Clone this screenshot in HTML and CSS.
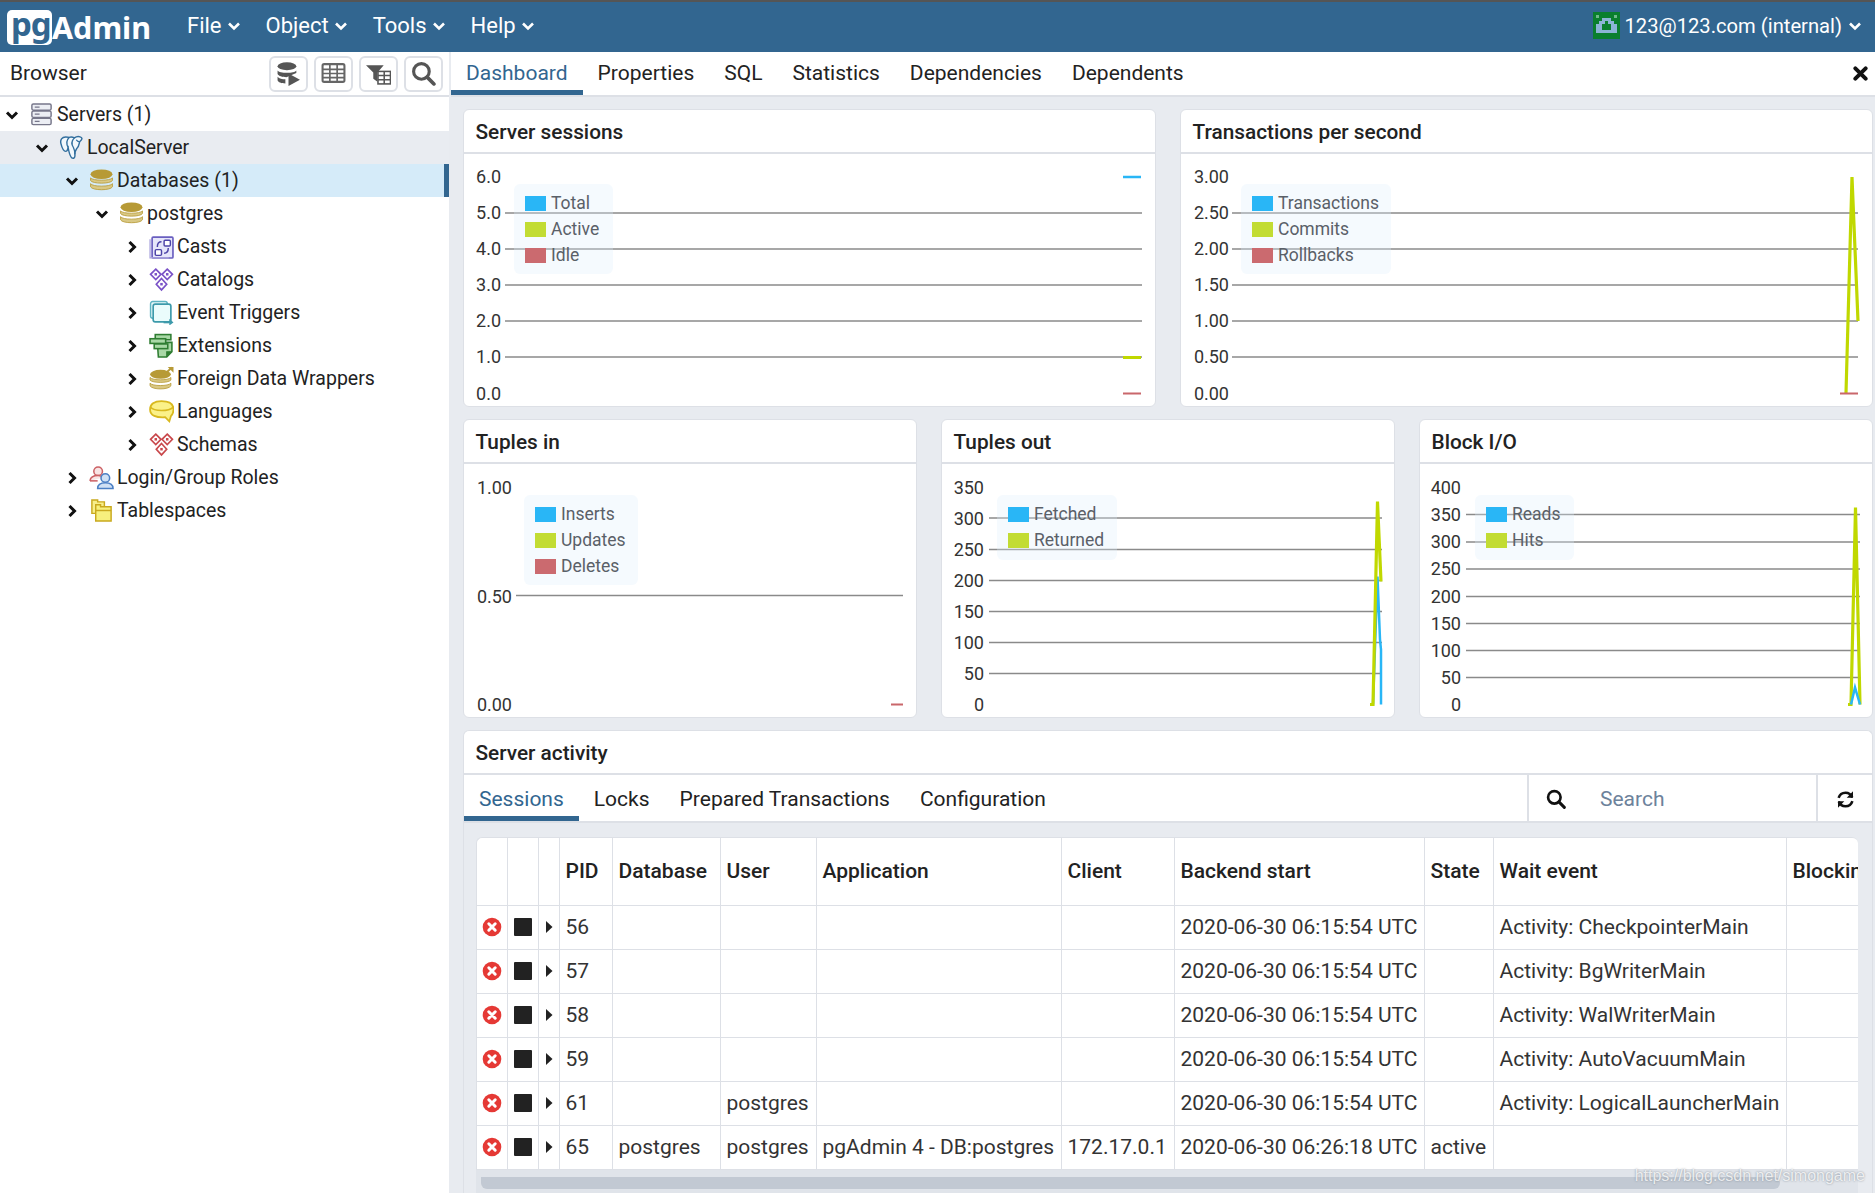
FILE: index.html
```html
<!DOCTYPE html>
<html lang="en">
<head>
<meta charset="utf-8">
<title>pgAdmin 4</title>
<link rel="stylesheet" href="styles.css">
</head>
<body>
<svg class="defs" width="0" height="0" aria-hidden="true">
  <defs>
    <symbol id="chev-d" viewBox="0 0 14 14"><path d="M2 4.500 7 9.500 12 4.500" fill="none" stroke="#111" stroke-width="3"/></symbol>
    <symbol id="chev-r" viewBox="0 0 14 14"><path d="M4.500 2 9.500 7 4.500 12" fill="none" stroke="#111" stroke-width="3"/></symbol>
    <symbol id="menu-chev" viewBox="0 0 14 14"><path d="M2 4.500 7 9.500 12 4.500" fill="none" stroke="#fff" stroke-width="2.600"/></symbol>
    <symbol id="db" viewBox="0 0 24 24">
      <ellipse cx="12" cy="6" rx="10.500" ry="4.600" fill="#b79a36"/>
      <path d="M1.500 9.500C3 12.400 21 12.400 22.500 9.500V12C21 15.400 3 15.400 1.500 12Z" fill="#d9c884" stroke="#b79a36" stroke-width=".8"/>
      <path d="M1.500 15C3 18.200 21 18.200 22.500 15V18C21 21.800 3 21.800 1.500 18Z" fill="#d9c884" stroke="#b79a36" stroke-width=".8"/>
    </symbol>
    <symbol id="diamonds" viewBox="0 0 24 24">
      <g fill="#fff" stroke="currentColor" stroke-width="1.600">
        <path d="M6.500 2 11.500 7 6.500 12 1.500 7Z"/><path d="M17.500 2 22.500 7 17.500 12 12.500 7Z"/><path d="M12 11 17 16.500 12 22 7 16.500Z"/>
      </g>
      <g fill="currentColor"><rect x="5.300" y="5.800" width="2.400" height="2.400"/><rect x="16.300" y="5.800" width="2.400" height="2.400"/><rect x="10.800" y="15.300" width="2.400" height="2.400"/></g>
    </symbol>
    <symbol id="cancel" viewBox="0 0 20 20"><circle cx="10" cy="10" r="9.300" fill="#e53935"/><path d="M6.800 6.800 13.200 13.200M13.200 6.800 6.800 13.200" stroke="#fff" stroke-width="3" stroke-linecap="round"/></symbol>
    <symbol id="caret" viewBox="0 0 8 12"><path d="M1 0 7.500 6 1 12Z" fill="#222"/></symbol>
  </defs>
</svg>

<div class="app">
  <header class="topbar">
    <div class="logo"><span class="logo-pg">pg</span><span class="logo-admin">Admin</span></div>
    <nav class="menu">
      <span class="menu-item">File <svg class="menu-chevron"><use href="#menu-chev"/></svg></span>
      <span class="menu-item">Object <svg class="menu-chevron"><use href="#menu-chev"/></svg></span>
      <span class="menu-item">Tools <svg class="menu-chevron"><use href="#menu-chev"/></svg></span>
      <span class="menu-item">Help <svg class="menu-chevron"><use href="#menu-chev"/></svg></span>
    </nav>
    <div class="user">
      <svg class="avatar" viewBox="0 0 9 9" shape-rendering="crispEdges">
        <rect width="9" height="9" fill="#0a7f2e"/>
        <path d="M1 1h1v1H1zM7 1h1v1H7z" fill="#6fb98a"/>
        <path d="M3 2h3v1h1v1H2V3h1zM1 4h2v3H1zM6 4h2v3H6zM3 6h3v1H3z" fill="#8cb4d6"/>
        <path d="M4 3h1v1H4z" fill="#0a7f2e"/>
      </svg>
      <span>123@123.com (internal)</span>
      <svg class="menu-chevron user-chevron"><use href="#menu-chev"/></svg>
    </div>
  </header>

  <div class="main">
    <aside class="browser">
      <div class="browser-head">
        <span class="browser-title">Browser</span>
        <div class="tools">
          <button class="tool" type="button"><svg viewBox="0 0 24 24"><ellipse cx="10.500" cy="5" rx="9" ry="3.800" fill="#555"/><path d="M1.500 9C3 12 18 12 19.500 9V11.500L10 15.500C6 15.500 2.500 14.500 1.500 12.500ZM1.500 15C3 17 6 17.500 9 17.500V21.500C5 21.500 2 20.500 1.500 18.500Z" fill="#555"/><path d="M12 12 23 18 12 24Z" fill="#555"/></svg></button>
          <button class="tool" type="button"><svg viewBox="0 0 24 24"><rect x="1.500" y="3" width="21" height="17" rx="1.500" fill="#fff" stroke="#666" stroke-width="2"/><path d="M1.500 8h21M1.500 12h21M1.500 16h21M8.500 3v17M15.500 3v17" stroke="#666" stroke-width="1.600"/></svg></button>
          <button class="tool" type="button"><svg viewBox="0 0 24 24"><path d="M0 4H17L11 11V20L7 17V11Z" fill="#555"/><rect x="11.500" y="10" width="12" height="12" fill="#fff" stroke="#555" stroke-width="1.500"/><path d="M11.500 14h12M11.500 18h12M17.500 10v12" stroke="#555" stroke-width="1.500"/></svg></button>
          <button class="tool" type="button"><svg viewBox="0 0 24 24"><circle cx="10" cy="10" r="7.500" fill="none" stroke="#555" stroke-width="3"/><path d="M15.500 15.500 22 22" stroke="#555" stroke-width="3.500" stroke-linecap="round"/></svg></button>
        </div>
      </div>
      <ul class="tree">
        <li class="node l0"><svg class="chev"><use href="#chev-d"/></svg>
          <svg class="ico" viewBox="0 0 26 26"><g fill="#eceef4" stroke="#77778a" stroke-width="1.500"><rect x="3" y="2" width="20" height="6.500" rx="1.500"/><rect x="3" y="9.500" width="20" height="6.500" rx="1.500"/><rect x="3" y="17" width="20" height="6.500" rx="1.500"/></g><path d="M6 5.200h5M6 12.700h5M6 20.200h5" stroke="#77778a" stroke-width="1.300"/></svg>
          <span>Servers (1)</span></li>
        <li class="node l1 hovered"><svg class="chev"><use href="#chev-d"/></svg>
          <svg class="ico" viewBox="0 0 26 26"><path d="M7 2C3 2 1 5 2 9 3 13 5 17 7 17 9 17 9 14 9.500 13 10 16 11 21 13 23.500 15 25 17 24 16.500 20 16.500 18 17 16 18.500 14 21 12 21 8 21.500 7 24 5 25 3 22 2 20 1 18 1.500 16 3 14 2 12 2 10.500 2.500 9.500 2 8 2 7 2Z" fill="#f2f8fc" stroke="#336f9e" stroke-width="1.500"/><path d="M10.500 2.500C8 5 7.500 9 9.500 13M16 3C13 6 13 10 15 13 16 15 16.500 17 16.500 20M21.500 7C20 7 18.500 6 18 5" fill="none" stroke="#336f9e" stroke-width="1.400"/></svg>
          <span>LocalServer</span></li>
        <li class="node l2 selected"><svg class="chev"><use href="#chev-d"/></svg>
          <svg class="ico"><use href="#db"/></svg>
          <span>Databases (1)</span></li>
        <li class="node l3"><svg class="chev"><use href="#chev-d"/></svg>
          <svg class="ico"><use href="#db"/></svg>
          <span>postgres</span></li>
        <li class="node l4"><svg class="chev"><use href="#chev-r"/></svg>
          <svg class="ico" viewBox="0 0 24 24"><rect x="3" y="3" width="20" height="20" rx="1" fill="#e6e6fa" stroke="#6a5fc0" stroke-width="1.600"/><path d="M1 5V23H19" fill="none" stroke="#a9a3de" stroke-width="1.200"/><rect x="14.500" y="6" width="6" height="5.500" rx="1" fill="#fff" stroke="#4d44a8" stroke-width="1.400"/><rect x="6" y="15" width="6" height="5.500" rx="1" fill="#fff" stroke="#4d44a8" stroke-width="1.400"/><path d="M12 7.500C9 7.500 8 9 8 12.500M14.500 18.500C17.500 18.500 18.500 17 18.500 13.500" fill="none" stroke="#4d44a8" stroke-width="1.400"/></svg>
          <span>Casts</span></li>
        <li class="node l4"><svg class="chev"><use href="#chev-r"/></svg>
          <svg class="ico purple"><use href="#diamonds"/></svg>
          <span>Catalogs</span></li>
        <li class="node l4"><svg class="chev"><use href="#chev-r"/></svg>
          <svg class="ico" viewBox="0 0 24 24"><rect x="1.500" y="1.500" width="16" height="16" rx="2" fill="#eafafa" stroke="#5db4c2" stroke-width="1.400"/><rect x="4" y="4" width="17" height="17" rx="2" fill="#eafcfc" stroke="#3d9aab" stroke-width="1.600"/><path d="M14 21.500H20" stroke="#3d9aab" stroke-width="1.800"/><path d="M19.500 18 23.500 21.500 19.500 24.500Z" fill="#3d9aab"/></svg>
          <span>Event Triggers</span></li>
        <li class="node l4"><svg class="chev"><use href="#chev-r"/></svg>
          <svg class="ico" viewBox="0 0 24 24"><g fill="#a9d8a6" stroke="#2f7d32" stroke-width="1.500"><path d="M8 9H22V18L17 23H9Z"/><rect x="6" y="1.500" width="15" height="5"/><rect x="1" y="5.500" width="15" height="4.500"/><rect x="5" y="10.500" width="13" height="4.500"/></g><path d="M17 23V18H22" fill="#2f7d32" stroke="#2f7d32"/></svg>
          <span>Extensions</span></li>
        <li class="node l4"><svg class="chev"><use href="#chev-r"/></svg>
          <svg class="ico" viewBox="0 0 24 24"><ellipse cx="11" cy="8" rx="10" ry="4.300" fill="#b79a36"/><path d="M1 11C3 14 19 14 21 11V13.500C19 16.500 3 16.500 1 13.500ZM1 16.500C3 19.500 19 19.500 21 16.500V19C19 23 3 23 1 19Z" fill="#d9c884" stroke="#b79a36" stroke-width=".8"/><path d="M17 6 22 1.500" stroke="#b79a36" stroke-width="1.800"/><path d="M18 1H23.500V6.500Z" fill="#b79a36"/></svg>
          <span>Foreign Data Wrappers</span></li>
        <li class="node l4"><svg class="chev"><use href="#chev-r"/></svg>
          <svg class="ico" viewBox="0 0 24 24"><path d="M12 2C20 2 23.500 5 23.500 10 23.500 13 22 15.500 21 16.500L19.500 21.500 15.500 17.500C7 18 1 16 1 10 1 5 5 2 12 2Z" fill="#fbf189" stroke="#d9b91f" stroke-width="1.700"/><path d="M1.500 8C5 12 19 12 23 8" fill="none" stroke="#d9b91f" stroke-width="1.500"/></svg>
          <span>Languages</span></li>
        <li class="node l4"><svg class="chev"><use href="#chev-r"/></svg>
          <svg class="ico red"><use href="#diamonds"/></svg>
          <span>Schemas</span></li>
        <li class="node l2"><svg class="chev"><use href="#chev-r"/></svg>
          <svg class="ico" viewBox="0 0 26 26"><circle cx="9.500" cy="6.500" r="4.500" fill="#f9e4e4" stroke="#cc6165" stroke-width="1.600"/><path d="M1 16.500C1.500 12.500 5 11 9.500 11 12 11 14 12 15 13" fill="#f9e4e4" stroke="#cc6165" stroke-width="1.600"/><path d="M1 16.500H9" stroke="#cc6165" stroke-width="1.600"/><circle cx="17" cy="13.500" r="4.500" fill="#cfe0f4" stroke="#4b7fc4" stroke-width="1.600"/><path d="M9 24.500C9 20 13 18.500 17 18.500 21 18.500 25 20 25 24.500Z" fill="#cfe0f4" stroke="#4b7fc4" stroke-width="1.600"/></svg>
          <span>Login/Group Roles</span></li>
        <li class="node l2"><svg class="chev"><use href="#chev-r"/></svg>
          <svg class="ico" viewBox="0 0 26 26"><g stroke="#c9a91e" stroke-width="1.500"><path d="M3 2H9V4H16V16H3Z" fill="#f7ee8a"/><path d="M7 7H12V9H23V24H7Z" fill="#f7f07e"/></g><path d="M7 13H23" stroke="#c9a91e" stroke-width="1.500"/></svg>
          <span>Tablespaces</span></li>
      </ul>
    </aside>

    <section class="content">
      <div class="tabs">
        <span class="tab active">Dashboard</span>
        <span class="tab">Properties</span>
        <span class="tab">SQL</span>
        <span class="tab">Statistics</span>
        <span class="tab">Dependencies</span>
        <span class="tab">Dependents</span>
        <svg class="close" viewBox="0 0 16 16"><path d="M2.500 2.500 13.500 13.500M13.500 2.500 2.500 13.500" stroke="#111" stroke-width="4.200" stroke-linecap="round"/></svg>
      </div>

      <div class="dash">
        <div class="row row-two">
          <article class="card">
            <h2 class="card-head">Server sessions</h2>
            <div class="chart">
              <svg class="plot" viewBox="464 154 691 252" preserveAspectRatio="xMinYMin">
                <g class="grid"><path d="M505 213H1142M505 249H1142M505 285H1142M505 321H1142M505 357H1142"/></g>
                <g class="yaxis"><text x="501" y="183">6.0</text><text x="501" y="219">5.0</text><text x="501" y="255">4.0</text><text x="501" y="291">3.0</text><text x="501" y="327">2.0</text><text x="501" y="363">1.0</text><text x="501" y="400">0.0</text></g>
                <path class="s-blue" d="M1123 177H1141"/>
                <path class="s-lime" d="M1123 357.500H1141"/>
                <path class="s-red" d="M1123 393.500H1141"/>
              </svg>
              <div class="legend lg-sessions">
                <div class="lg-row"><i class="sw blue"></i>Total</div>
                <div class="lg-row"><i class="sw lime"></i>Active</div>
                <div class="lg-row"><i class="sw red-sw"></i>Idle</div>
              </div>
            </div>
          </article>
          <article class="card">
            <h2 class="card-head">Transactions per second</h2>
            <div class="chart">
              <svg class="plot" viewBox="1181 154 691 252" preserveAspectRatio="xMinYMin">
                <g class="grid"><path d="M1232 213H1858M1232 249H1858M1232 285H1858M1232 321H1858M1232 357H1858"/></g>
                <g class="yaxis"><text x="1229" y="183">3.00</text><text x="1229" y="219">2.50</text><text x="1229" y="255">2.00</text><text x="1229" y="291">1.50</text><text x="1229" y="327">1.00</text><text x="1229" y="363">0.50</text><text x="1229" y="400">0.00</text></g>
                <path class="s-lime" d="M1846 393 1852 177 1858 321"/>
                <path class="s-red" d="M1840 393.500H1858"/>
              </svg>
              <div class="legend lg-tps">
                <div class="lg-row"><i class="sw blue"></i>Transactions</div>
                <div class="lg-row"><i class="sw lime"></i>Commits</div>
                <div class="lg-row"><i class="sw red-sw"></i>Rollbacks</div>
              </div>
            </div>
          </article>
        </div>

        <div class="row row-three">
          <article class="card">
            <h2 class="card-head">Tuples in</h2>
            <div class="chart">
              <svg class="plot" viewBox="464 464.500 452 253" preserveAspectRatio="xMinYMin">
                <g class="grid"><path d="M516 596H903"/></g>
                <g class="yaxis"><text x="512" y="494">1.00</text><text x="512" y="603">0.50</text><text x="512" y="711">0.00</text></g>
                <path class="s-red" d="M891 705H903"/>
              </svg>
              <div class="legend lg-in">
                <div class="lg-row"><i class="sw blue"></i>Inserts</div>
                <div class="lg-row"><i class="sw lime"></i>Updates</div>
                <div class="lg-row"><i class="sw red-sw"></i>Deletes</div>
              </div>
            </div>
          </article>
          <article class="card">
            <h2 class="card-head">Tuples out</h2>
            <div class="chart">
              <svg class="plot" viewBox="942 464.500 452 253" preserveAspectRatio="xMinYMin">
                <g class="grid"><path d="M989 518.500H1382M989 550H1382M989 581H1382M989 612H1382M989 643H1382M989 674H1382"/></g>
                <g class="yaxis"><text x="984" y="494">350</text><text x="984" y="525">300</text><text x="984" y="556">250</text><text x="984" y="587">200</text><text x="984" y="618">150</text><text x="984" y="649">100</text><text x="984" y="680">50</text><text x="984" y="711">0</text></g>
                <path class="s-blue" d="M1373 705 1377.500 577 1380 640 1381 650V705"/>
                <path class="s-lime" d="M1370 705H1373L1377.500 502 1381 582"/>
              </svg>
              <div class="legend lg-out">
                <div class="lg-row"><i class="sw blue"></i>Fetched</div>
                <div class="lg-row"><i class="sw lime"></i>Returned</div>
              </div>
            </div>
          </article>
          <article class="card">
            <h2 class="card-head">Block I/O</h2>
            <div class="chart">
              <svg class="plot" viewBox="1420 464.500 452 253" preserveAspectRatio="xMinYMin">
                <g class="grid"><path d="M1466 515H1860M1466 542.500H1860M1466 569.500H1860M1466 597H1860M1466 624H1860M1466 651H1860M1466 678H1860"/></g>
                <g class="yaxis"><text x="1461" y="494">400</text><text x="1461" y="521">350</text><text x="1461" y="548">300</text><text x="1461" y="575">250</text><text x="1461" y="603">200</text><text x="1461" y="630">150</text><text x="1461" y="657">100</text><text x="1461" y="684">50</text><text x="1461" y="711">0</text></g>
                <path class="s-lime" d="M1848 705H1851L1855.500 508 1860 705"/>
                <path class="s-blue" d="M1851 705 1855 688 1860 705"/>
              </svg>
              <div class="legend lg-io">
                <div class="lg-row"><i class="sw blue"></i>Reads</div>
                <div class="lg-row"><i class="sw lime"></i>Hits</div>
              </div>
            </div>
          </article>
        </div>

        <article class="card activity">
          <h2 class="card-head">Server activity</h2>
          <div class="subtabs">
            <span class="tab active">Sessions</span>
            <span class="tab">Locks</span>
            <span class="tab">Prepared Transactions</span>
            <span class="tab">Configuration</span>
            <div class="search">
              <svg class="search-ico" viewBox="0 0 24 24"><circle cx="10" cy="10" r="7.500" fill="none" stroke="#111" stroke-width="3.200"/><path d="M15.500 15.500 22 22" stroke="#111" stroke-width="3.600" stroke-linecap="round"/></svg>
              <span class="placeholder">Search</span>
            </div>
            <div class="refresh">
              <svg viewBox="0 0 24 24"><path d="M20.500 9.500C19 5.500 15.500 3.500 12 3.500 8 3.500 4.500 6 3.300 10" fill="none" stroke="#111" stroke-width="3.200"/><path d="M21.500 1.500V9.800H13.500Z" fill="#111"/><path d="M3.500 14.500C5 18.500 8.500 20.500 12 20.500 16 20.500 19.500 18 20.700 14" fill="none" stroke="#111" stroke-width="3.200"/><path d="M2.500 22.500V14.200H10.500Z" fill="#111"/></svg>
            </div>
          </div>
          <div class="grid-area">
            <div class="table-wrap">
              <table class="sessions">
                <colgroup>
                  <col class="c-a"><col class="c-b"><col class="c-c"><col class="c-pid"><col class="c-db"><col class="c-user"><col class="c-app"><col class="c-client"><col class="c-start"><col class="c-state"><col class="c-wait"><col class="c-block">
                </colgroup>
                <thead>
                  <tr><th></th><th></th><th></th><th>PID</th><th>Database</th><th>User</th><th>Application</th><th>Client</th><th>Backend start</th><th>State</th><th>Wait event</th><th>Blocking PIDs</th></tr>
                </thead>
                <tbody>
                  <tr><td class="ic"><svg class="cancel"><use href="#cancel"/></svg></td><td class="ic"><span class="stop"></span></td><td class="ic"><svg class="caret"><use href="#caret"/></svg></td><td>56</td><td></td><td></td><td></td><td></td><td>2020-06-30 06:15:54 UTC</td><td></td><td>Activity: CheckpointerMain</td><td></td></tr>
                  <tr><td class="ic"><svg class="cancel"><use href="#cancel"/></svg></td><td class="ic"><span class="stop"></span></td><td class="ic"><svg class="caret"><use href="#caret"/></svg></td><td>57</td><td></td><td></td><td></td><td></td><td>2020-06-30 06:15:54 UTC</td><td></td><td>Activity: BgWriterMain</td><td></td></tr>
                  <tr><td class="ic"><svg class="cancel"><use href="#cancel"/></svg></td><td class="ic"><span class="stop"></span></td><td class="ic"><svg class="caret"><use href="#caret"/></svg></td><td>58</td><td></td><td></td><td></td><td></td><td>2020-06-30 06:15:54 UTC</td><td></td><td>Activity: WalWriterMain</td><td></td></tr>
                  <tr><td class="ic"><svg class="cancel"><use href="#cancel"/></svg></td><td class="ic"><span class="stop"></span></td><td class="ic"><svg class="caret"><use href="#caret"/></svg></td><td>59</td><td></td><td></td><td></td><td></td><td>2020-06-30 06:15:54 UTC</td><td></td><td>Activity: AutoVacuumMain</td><td></td></tr>
                  <tr><td class="ic"><svg class="cancel"><use href="#cancel"/></svg></td><td class="ic"><span class="stop"></span></td><td class="ic"><svg class="caret"><use href="#caret"/></svg></td><td>61</td><td></td><td>postgres</td><td></td><td></td><td>2020-06-30 06:15:54 UTC</td><td></td><td>Activity: LogicalLauncherMain</td><td></td></tr>
                  <tr><td class="ic"><svg class="cancel"><use href="#cancel"/></svg></td><td class="ic"><span class="stop"></span></td><td class="ic"><svg class="caret"><use href="#caret"/></svg></td><td>65</td><td>postgres</td><td>postgres</td><td>pgAdmin 4 - DB:postgres</td><td>172.17.0.1</td><td>2020-06-30 06:26:18 UTC</td><td>active</td><td></td><td></td></tr>
                </tbody>
              </table>
            </div>
            <div class="hscroll"><div class="hthumb"></div></div>
          </div>
        </article>
      </div>
    </section>
  </div>
  <div class="watermark">https://blog.csdn.net/simongame</div>
</div>
</body>
</html>
```
FILE: styles.css
```css
* { box-sizing: border-box; }
html, body { margin: 0; padding: 0; height: 100%; overflow: hidden; }
body { font-family: Roboto, "Liberation Sans", sans-serif; font-size: 21px; color: #222; background: #fff; }
.defs { position: absolute; }
.app { position: relative; display: flex; flex-direction: column; width: 1875px; height: 1193px; overflow: hidden; }

/* top bar */
.topbar { flex: none; display: flex; align-items: center; height: 52px; background: #326690; border-top: 2px solid #555; color: #fff; padding-left: 7px; }
.logo { display: flex; align-items: center; width: 180px; }
.logo-pg { display: block; width: 45px; height: 35px; background: #fff; border-radius: 5px; color: #326690; font: 700 33px/28px "Noto Sans", sans-serif; letter-spacing: -1px; padding-left: 4px; }
.logo-admin { font: 700 30.500px/35px "Noto Sans", sans-serif; margin-left: 0; }
.menu { display: flex; gap: 25px; font-size: 22px; }
.menu-item { display: flex; align-items: center; gap: 5px; padding-bottom: 3px; }
.menu-chevron { width: 14px; height: 14px; }
.user { margin-left: auto; display: flex; align-items: center; gap: 5px; font-size: 20.200px; padding-right: 13px; padding-bottom: 3px; }
.avatar { width: 27px; height: 27px; }
.user-chevron { margin-left: 1px; }

.main { flex: 1; display: flex; min-height: 0; }

/* browser */
.browser { flex: none; width: 451px; background: #fff; border-right: 2px solid #e8ebf0; font-size: 19.500px; }
.browser-head { display: flex; align-items: center; height: 45px; border-bottom: 2px solid #dde0e6; padding-left: 10px; padding-right: 6px; }
.browser-title { flex: 1; font-size: 21px; padding-bottom: 1px; }
.tools { display: flex; gap: 6px; }
.tool { width: 39px; height: 36px; padding: 0; display: flex; align-items: center; justify-content: center; background: #fff; border: 2px solid #dde0e6; border-radius: 6px; }
.tool svg { width: 25px; height: 25px; }
.tree { list-style: none; margin: 1px 0 0; padding: 0; }
.node { display: flex; align-items: center; height: 33px; white-space: nowrap; }
.l0 { padding-left: 5px; }
.l1 { padding-left: 35px; }
.l2 { padding-left: 65px; }
.l3 { padding-left: 95px; }
.l4 { padding-left: 125px; }
.hovered { background: #e9ecf1; }
.selected { background: #d5ebf9; border-right: 5px solid #326690; }
.chev { flex: none; width: 14px; height: 14px; margin-right: 10px; }
.ico { flex: none; width: 25px; height: 25px; margin-right: 3px; }
.purple { color: #7a52c7; }
.red { color: #c9484c; }

/* content */
.content { flex: 1; display: flex; flex-direction: column; min-width: 0; background: #e8ebf0; }
.tabs { flex: none; position: relative; display: flex; height: 45px; background: #fff; border-bottom: 2px solid #dde0e6; }
.tab { padding: 0 15px; height: 43px; line-height: 43px; white-space: nowrap; border-bottom: 5px solid transparent; }
.tab.active { color: #326690; border-bottom-color: #326690; }
.close { position: absolute; right: 7px; top: 14px; width: 15px; height: 15px; }

.dash { flex: 1; display: flex; flex-direction: column; gap: 12px; padding: 12px 2px 0 12px; min-height: 0; }
.row { display: grid; flex: none; }
.row-two { grid-template-columns: 1fr 1fr; gap: 24px; height: 298px; }
.row-three { grid-template-columns: 1fr 1fr 1fr; gap: 24px; height: 299px; }
.card { display: flex; flex-direction: column; background: #fff; border: 1px solid #dde0e6; border-radius: 6px; overflow: hidden; min-width: 0; }
.card-head { flex: none; margin: 0; height: 44px; padding: 0 11.500px; font-size: 20.800px; font-weight: 500; line-height: 44px; border-bottom: 2px solid #dde0e6; }
.chart { position: relative; flex: 1; min-height: 0; }
.plot { display: block; width: 100%; height: 100%; }
.grid path { fill: none; stroke: #8a8a8a; stroke-width: 1.500; }
.yaxis text { font-family: Roboto, sans-serif; font-size: 18px; fill: #333; text-anchor: end; }
.s-blue, .s-lime, .s-red { fill: none; stroke-width: 2.500; }
.s-blue { stroke: #29b6f6; }
.s-lime { stroke: #c0d800; stroke-width: 3.200; }
.s-red { stroke: #c9676b; stroke-width: 2; }

.legend { position: absolute; background: rgba(222, 238, 252, .3); border-radius: 6px; padding: 6px 11px 0; font-size: 17.500px; color: #5a6068; }
.lg-row { display: flex; align-items: center; height: 26px; white-space: nowrap; }
.sw { flex: none; width: 21px; height: 15px; margin-right: 5px; }
.blue { background: #29b6f6; }
.lime { background: #c2dc33; }
.red-sw { background: #cb6a6f; }
.lg-sessions { left: 50px; top: 30px; width: 99px; height: 90px; }
.lg-tps { left: 60px; top: 30px; width: 150px; height: 90px; }
.lg-in { left: 60px; top: 31px; width: 114px; height: 90px; }
.lg-out { left: 55px; top: 31px; width: 120px; height: 65px; }
.lg-io { left: 55px; top: 31px; width: 99px; height: 65px; }

/* activity */
.activity { flex: 1; border-bottom: 0; border-radius: 6px 6px 0 0; min-height: 0; }
.subtabs { flex: none; display: flex; height: 48px; border-bottom: 2px solid #dde0e6; }
.subtabs .tab { height: 46px; padding-top: 4px; line-height: 40px; }
.search { margin-left: auto; width: 291px; display: flex; align-items: center; padding-top: 2px; border-left: 2px solid #dde0e6; border-right: 2px solid #dde0e6; }
.search-ico { width: 20px; height: 20px; margin-left: 17px; margin-right: 34px; }
.placeholder { color: #6d829b; }
.refresh { width: 54px; display: flex; align-items: center; justify-content: center; padding-top: 2px; }
.refresh svg { width: 19px; height: 19px; }
.grid-area { flex: 1; background: #e8ebf0; padding: 14px 14px 0 12px; min-height: 0; }
.table-wrap { background: #fff; border-radius: 6px 6px 0 0; overflow: hidden; border-top: 1px solid #dde0e6; border-left: 1px solid #dde0e6; }
.sessions { table-layout: fixed; width: 1502px; border-collapse: collapse; }
.c-a { width: 30px; } .c-b { width: 31px; } .c-c { width: 21px; } .c-pid { width: 53px; }
.c-db { width: 108px; } .c-user { width: 96px; } .c-app { width: 245px; } .c-client { width: 113px; }
.c-start { width: 250px; } .c-state { width: 69px; } .c-wait { width: 293px; } .c-block { width: 193px; }
.sessions th, .sessions td { border: 1px solid #dde0e6; border-left: 0; border-top: 0; padding: 0 0 0 6px; text-align: left; white-space: nowrap; overflow: hidden; color: #333; }
.sessions th { height: 67px; font-weight: 500; color: #222; }
.sessions td { height: 44px; }
.sessions td.ic { padding: 0; text-align: center; }
.cancel { display: block; width: 20px; height: 20px; margin: 0 auto; }
.stop { display: block; width: 18px; height: 18px; margin: 0 auto; background: #222; border-radius: 1px; }
.caret { display: block; width: 8px; height: 12px; margin: 0 auto; }
.hscroll { height: 24px; background: #e0e4ea; padding-top: 7px; padding-left: 5px; }
.hthumb { width: 1299px; height: 12px; background: #c2c9d3; border-radius: 0 6px 6px 6px; }

.watermark { position: absolute; right: 10px; bottom: 8px; font: 16px "Liberation Sans", sans-serif; color: rgba(255, 255, 255, .8); text-shadow: 0 0 2px rgba(120, 130, 140, .9); }
```
